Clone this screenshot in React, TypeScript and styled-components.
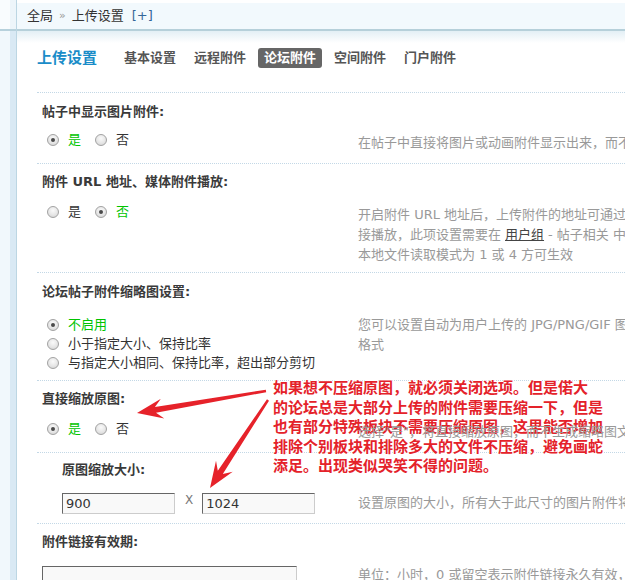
import React from 'react';
import styled, { createGlobalStyle } from 'styled-components';

const GlobalStyle = createGlobalStyle`
  html, body {
    margin: 0;
    padding: 0;
    background: #fff;
    overflow: hidden;
  }
  body {
    font-family: "DejaVu Sans", "Noto Sans CJK SC", sans-serif;
    font-size: 13px;
    line-height: 20px;
    color: #333;
  }
`;

const Page = styled.div`
  position: relative;
  display: flex;
  align-items: stretch;
  width: 625px;
  height: 580px;
  overflow: hidden;
`;

const Side = styled.div`
  flex-shrink: 0;
  width: 16px;
  display: flex;
  flex-direction: column;
  border-right: 1px solid #bcd6e3;
`;

const SideTop = styled.div`
  flex-shrink: 0;
  height: 29px;
  border-bottom: 2px solid #b7d1dc;
  background: linear-gradient(to right, #f9fcfe 10px, #edf5fa 10px);
`;

const SideBody = styled.div`
  flex: 1;
  background: linear-gradient(to right, #f1f8fc 10px, #d9e9f4 10px);
`;

const Main = styled.div`
  flex: 1;
  min-width: 0;
  display: flex;
  flex-direction: column;
  overflow: hidden;
`;

const Header = styled.div`
  flex-shrink: 0;
  margin-top: 3px;
  height: 26px;
  padding-left: 10px;
  display: flex;
  align-items: center;
  background: #f2f9fd;
  border-bottom: 2px solid #b6d0da;
  white-space: nowrap;
`;

const Crumb = styled.span`
  color: #333;
`;

const CrumbSep = styled.span`
  margin: 0 6px;
  font-size: 11px;
  color: #999;
`;

const AddLink = styled.span`
  margin-left: 8px;
  color: #369;
`;

const Content = styled.div`
  flex: 1 0 auto;
  padding-left: 20px;
  background: linear-gradient(#e3eff5 0, #fff 12px) no-repeat;
`;

const Tabs = styled.div`
  display: flex;
  align-items: center;
  gap: 6px;
  padding-top: 17px;
  height: 20px;
  white-space: nowrap;
`;

const PageTitle = styled.h3`
  margin: 0 15px 0 0;
  font-size: 15px;
  line-height: 20px;
  font-weight: 700;
  color: #1a8cc8;
`;

const Tab = styled.span<{ $active?: boolean }>`
  padding: 0 6px;
  height: 20px;
  line-height: 20px;
  font-weight: 700;
  border-radius: 3px;
  color: ${(p) => (p.$active ? '#fff' : '#555')};
  background: ${(p) => (p.$active ? '#666' : 'transparent')};
`;

const Table = styled.div`
  margin-top: 24px;
  width: 900px;
`;

const Setting = styled.div`
  border-top: 1px dotted #c3d8e6;
`;

const SettingTitle = styled.div<{ $top: number; $indent?: boolean }>`
  padding: ${(p) => p.$top}px 5px 0 ${(p) => (p.$indent ? 25 : 5)}px;
  font-weight: 700;
  color: #3a3a3a;
  white-space: nowrap;
`;

const SettingBody = styled.div<{ $top: number; $bottom: number }>`
  display: flex;
  align-items: flex-start;
  padding: ${(p) => p.$top}px 0 ${(p) => p.$bottom}px;
`;

const Control = styled.div<{ $indent?: boolean }>`
  flex-shrink: 0;
  box-sizing: border-box;
  width: 321px;
  padding-left: ${(p) => (p.$indent ? 25 : 5)}px;
  display: flex;
  align-items: flex-start;
`;

const Tips = styled.div<{ $offset?: number }>`
  position: relative;
  z-index: 2;
  margin-top: ${(p) => p.$offset ?? 0}px;
  color: #999;
  white-space: nowrap;
`;

const UserGroup = styled.span`
  margin: 0 4px;
  color: #444;
  text-decoration: underline;
`;

const RadioList = styled.div`
  display: flex;
  flex-direction: column;
  line-height: 19px;
`;

const RadioItem = styled.label<{ $checked?: boolean }>`
  display: inline-flex;
  align-items: center;
  margin-left: 5px;
  margin-right: 9px;
  color: ${(p) => (p.$checked ? '#00c400' : '#333')};
`;

const RadioMark = styled.span<{ $checked?: boolean }>`
  position: relative;
  box-sizing: border-box;
  width: 12px;
  height: 12px;
  margin-right: 9px;
  border-radius: 50%;
  border: 1px solid #a2a2a2;
  background: radial-gradient(circle at 50% 35%, #fafafa 0, #e6e6e6 55%, #cfcfcf 100%);

  &::after {
    content: '';
    display: ${(p) => (p.$checked ? 'block' : 'none')};
    position: absolute;
    left: 3px;
    top: 3px;
    width: 4px;
    height: 4px;
    border-radius: 50%;
    background: #4a4a4a;
  }
`;

const TextInput = styled.input<{ $width: number }>`
  box-sizing: border-box;
  width: ${(p) => p.$width}px;
  height: 21px;
  margin: 0;
  padding: 0 3px;
  border: 1px solid;
  border-color: #666 #ccc #ccc #666;
  background: #f9f9f9;
  font-family: "DejaVu Sans", sans-serif;
  font-size: 13px;
  color: #333;
  outline: none;
`;

const Times = styled.span`
  margin: 0 9px 0 10px;
  line-height: 14px;
  font-family: "DejaVu Sans", sans-serif;
  font-size: 12px;
  color: #777;
`;

const Note = styled.div`
  position: absolute;
  z-index: 1;
  left: 273px;
  top: 377px;
  font-family: "Noto Sans CJK SC", sans-serif;
  font-size: 15px;
  line-height: 19.5px;
  font-weight: 700;
  color: #e4222a;
  white-space: nowrap;
  text-shadow: -1px 0 #fff, 1px 0 #fff, 0 -1px #fff, 0 1px #fff;
`;

const ArrowLayer = styled.svg`
  position: absolute;
  z-index: 1;
  left: 0;
  top: 0;
  pointer-events: none;
`;

function arrowPoints(sx: number, sy: number, tx: number, ty: number) {
  const tail = 2.5;
  const neck = 6;
  const headLen = 26;
  const headHalf = 10;
  const dx = tx - sx;
  const dy = ty - sy;
  const len = Math.hypot(dx, dy);
  const ux = dx / len;
  const uy = dy / len;
  const nx = -uy;
  const ny = ux;
  const bx = tx - ux * headLen * 0.72;
  const by = ty - uy * headLen * 0.72;
  const wx = tx - ux * headLen;
  const wy = ty - uy * headLen;
  const pts = [
    [sx + (nx * tail) / 2, sy + (ny * tail) / 2],
    [bx + (nx * neck) / 2, by + (ny * neck) / 2],
    [wx + nx * headHalf, wy + ny * headHalf],
    [tx, ty],
    [wx - nx * headHalf, wy - ny * headHalf],
    [bx - (nx * neck) / 2, by - (ny * neck) / 2],
    [sx - (nx * tail) / 2, sy - (ny * tail) / 2],
  ];
  return pts.map(([x, y]) => `${x.toFixed(1)},${y.toFixed(1)}`).join(' ');
}

const Radio = ({ label, checked }: { label: string; checked?: boolean }) => (
  <RadioItem $checked={checked}>
    <RadioMark $checked={checked} />
    {label}
  </RadioItem>
);

export default function App() {
  return (
    <Page>
      <GlobalStyle />
      <Side>
        <SideTop />
        <SideBody />
      </Side>
      <Main>
        <Header>
          <Crumb>全局</Crumb>
          <CrumbSep>»</CrumbSep>
          <Crumb>上传设置</Crumb>
          <AddLink>[+]</AddLink>
        </Header>
        <Content>
          <Tabs>
            <PageTitle>上传设置</PageTitle>
            <Tab>基本设置</Tab>
            <Tab>远程附件</Tab>
            <Tab $active>论坛附件</Tab>
            <Tab>空间附件</Tab>
            <Tab>门户附件</Tab>
          </Tabs>

          <Table>
            <Setting>
              <SettingTitle $top={9}>帖子中显示图片附件:</SettingTitle>
              <SettingBody $top={8} $bottom={10}>
                <Control>
                  <Radio label="是" checked />
                  <Radio label="否" />
                </Control>
                <Tips $offset={3}>在帖子中直接将图片或动画附件显示出来，而不需要点击附件链接</Tips>
              </SettingBody>
            </Setting>

            <Setting>
              <SettingTitle $top={8}>附件 URL 地址、媒体附件播放:</SettingTitle>
              <SettingBody $top={10} $bottom={7}>
                <Control>
                  <Radio label="是" />
                  <Radio label="否" checked />
                </Control>
                <Tips $offset={3}>
                  开启附件 URL 地址后，上传附件的地址可通过 "attachment.php" 方式访问，媒体附件可以直
                  <br />
                  接播放，此项设置需要在<UserGroup>用户组</UserGroup>- 帖子相关 中允许用户使用媒体播放
                  <br />
                  本地文件读取模式为 1 或 4 方可生效
                </Tips>
              </SettingBody>
            </Setting>

            <Setting>
              <SettingTitle $top={9}>论坛帖子附件缩略图设置:</SettingTitle>
              <SettingBody $top={13} $bottom={8}>
                <Control>
                  <RadioList>
                    <Radio label="不启用" checked />
                    <Radio label="小于指定大小、保持比率" />
                    <Radio label="与指定大小相同、保持比率，超出部分剪切" />
                  </RadioList>
                </Control>
                <Tips>
                  您可以设置自动为用户上传的 JPG/PNG/GIF 图片附件添加缩略图，此功能需要 PHP 支持的
                  <br />
                  格式
                </Tips>
              </SettingBody>
            </Setting>

            <Setting>
              <SettingTitle $top={8}>直接缩放原图:</SettingTitle>
              <SettingBody $top={10} $bottom={10}>
                <Control>
                  <Radio label="是" checked />
                  <Radio label="否" />
                </Control>
                <Tips $offset={3}>选择"是"，将直接缩放原图，而不生成缩略图文件</Tips>
              </SettingBody>
            </Setting>

            <Setting>
              <SettingTitle $top={7} $indent>原图缩放大小:</SettingTitle>
              <SettingBody $top={13} $bottom={9}>
                <Control $indent>
                  <TextInput $width={113} defaultValue="900" />
                  <Times>X</Times>
                  <TextInput $width={113} defaultValue="1024" />
                </Control>
                <Tips>设置原图的大小，所有大于此尺寸的图片附件将缩小到指定大小</Tips>
              </SettingBody>
            </Setting>

            <Setting>
              <SettingTitle $top={8}>附件链接有效期:</SettingTitle>
              <SettingBody $top={14} $bottom={0}>
                <Control>
                  <TextInput $width={255} defaultValue="" />
                </Control>
                <Tips $offset={-1}>单位：小时，0 或留空表示附件链接永久有效，过期后链接将自动失效</Tips>
              </SettingBody>
            </Setting>
          </Table>
        </Content>
      </Main>

      <ArrowLayer width="625" height="580" viewBox="0 0 625 580">
        <polygon points={arrowPoints(266, 391, 137, 413)} fill="#e6222a" />
        <polygon points={arrowPoints(268, 400, 210, 488)} fill="#e6222a" />
      </ArrowLayer>

      <Note>
        如果想不压缩原图，就必须关闭选项。但是偌大
        <br />
        的论坛总是大部分上传的附件需要压缩一下，但是
        <br />
        也有部分特殊板块不需要压缩原图，这里能否增加
        <br />
        排除个别板块和排除多大的文件不压缩，避免画蛇
        <br />
        添足。出现类似哭笑不得的问题。
      </Note>
    </Page>
  );
}
